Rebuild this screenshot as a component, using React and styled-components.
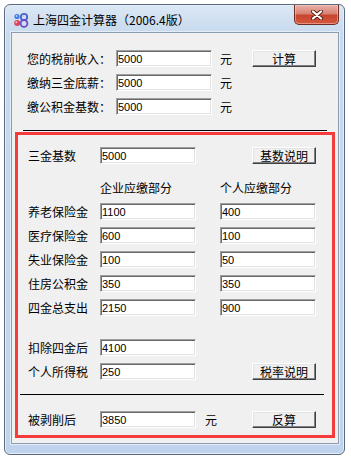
import React, { useState } from "react";
import styled, { createGlobalStyle } from "styled-components";

const GlobalStyle = createGlobalStyle`
  body {
    margin: 0;
    background: #ffffff;
    font-family: "Noto Sans CJK SC", "Noto Sans", sans-serif;
  }
`;

const Window = styled.div`
  box-sizing: border-box;
  width: 341px;
  height: 451px;
  margin: 4px 0 0 4px;
  border: 1px solid #5a6a7e;
  border-radius: 6px;
  background: linear-gradient(180deg, #dbe7f4 0px, #c8daee 28px, #bfd4ec 100%);
  box-shadow: inset 0 0 0 1px #e6eff9;
`;

const TitleBar = styled.div`
  display: flex;
  align-items: center;
  height: 27px;
  padding: 2px 5px 0 8px;
  box-sizing: border-box;
`;

const AppIcon = styled.svg`
  width: 16px;
  height: 16px;
  flex: none;
`;

const Title = styled.span`
  margin-left: 4px;
  font-size: 12px;
  line-height: 16px;
  color: #000;
`;

const CloseButton = styled.button`
  align-self: flex-start;
  margin: -2px 0 0 auto;
  width: 45px;
  height: 20px;
  padding: 0;
  display: flex;
  align-items: center;
  justify-content: center;
  border: 1px solid #6e2c24;
  border-top: none;
  border-radius: 0 0 5px 5px;
  background: linear-gradient(
    180deg,
    #e9b1a6 0%,
    #d98473 45%,
    #c8442f 55%,
    #d5583e 100%
  );
  box-shadow: inset 0 0 0 1px rgba(255, 220, 210, 0.45);
  cursor: pointer;
`;

const Client = styled.div`
  box-sizing: border-box;
  width: 328px;
  height: 412px;
  margin-left: 6px;
  padding: 0 3px;
  border: 1px solid #8c9db2;
  background: #f0f0f0;
  box-shadow: 0 0 0 1px #e4edf7;
`;

const TopForm = styled.div`
  display: grid;
  grid-template-columns: 89px 96px 40px 64px;
  grid-auto-rows: 24px;
  align-items: start;
  padding: 17px 0 0 12px;
`;

const Label = styled.span`
  font-size: 12px;
  line-height: 17px;
  color: #000;
  white-space: nowrap;
`;

const Unit = styled(Label)`
  padding-left: ${(p) => p.$indent || 8}px;
`;

const Field = styled.input`
  box-sizing: border-box;
  width: 96px;
  height: 17px;
  margin: 0;
  padding: 0 1px;
  border: 1px solid;
  border-color: #a0a0a0 #ffffff #ffffff #a0a0a0;
  box-shadow: inset 1px 1px 0 #696969, inset -1px -1px 0 #e3e3e3;
  background: #fff;
  font-family: "Liberation Sans", Arial, sans-serif;
  font-size: 11px;
  color: #000;
  outline: none;
`;

const PushButton = styled.button`
  box-sizing: border-box;
  grid-column: ${(p) => p.$col || "auto"};
  width: 64px;
  height: 17px;
  margin: 0;
  padding: 0;
  border: 1px solid;
  border-color: #ffffff #404040 #404040 #ffffff;
  box-shadow: inset -1px -1px 0 #808080, inset 1px 1px 0 #e3e3e3;
  background: #f0f0f0;
  font-family: "Noto Sans CJK SC", sans-serif;
  font-size: 12px;
  line-height: 14px;
  color: #000;
  cursor: pointer;
`;

const Rule = styled.div`
  width: 304px;
  height: 1px;
  background: #000;
  margin: ${(p) => p.$margin};
`;

const Highlight = styled.div`
  box-sizing: border-box;
  width: 320px;
  margin-top: 1px;
  padding: 12px 0 7px 0;
  border: 3px solid #f53b3b;
`;

const Row = styled.div`
  display: grid;
  grid-template-columns: 72px 96px 24px 96px;
  align-items: ${(p) => (p.$center ? "center" : "start")};
  height: ${(p) => p.$height || 24}px;
  padding-left: 10px;
`;

const Spacer = styled.div`
  height: ${(p) => p.$size}px;
`;

const RightButton = styled(PushButton)`
  grid-column: 4;
  justify-self: end;
`;

function CloseGlyph() {
  return (
    <svg width="12" height="10" viewBox="0 0 12 10">
      <path
        d="M2 1.5 L10 8.5 M10 1.5 L2 8.5"
        stroke="#5a1e16"
        strokeWidth="4"
        strokeLinecap="round"
      />
      <path
        d="M2 1.5 L10 8.5 M10 1.5 L2 8.5"
        stroke="#ffffff"
        strokeWidth="2.2"
        strokeLinecap="round"
      />
    </svg>
  );
}

function Logo() {
  return (
    <AppIcon viewBox="0 0 16 16">
      <circle cx="4" cy="4.5" r="2.6" fill="#3f7fe0" />
      <circle cx="3.6" cy="4" r="0.9" fill="#bcd8ff" />
      <circle cx="4.2" cy="11" r="3" fill="#e2415b" />
      <circle cx="3.4" cy="10.2" r="1" fill="#ffc0cc" />
      <circle cx="11" cy="5" r="3.2" fill="none" stroke="#4b63c8" strokeWidth="1.8" />
      <circle cx="11" cy="11.4" r="3.4" fill="none" stroke="#6a4fc4" strokeWidth="1.8" />
      <circle cx="10.2" cy="4.2" r="0.8" fill="#a9c4ff" />
    </AppIcon>
  );
}

const insurance = [
  { name: "养老保险金", company: "1100", person: "400" },
  { name: "医疗保险金", company: "600", person: "100" },
  { name: "失业保险金", company: "100", person: "50" },
  { name: "住房公积金", company: "350", person: "350" },
  { name: "四金总支出", company: "2150", person: "900" },
];

export default function App() {
  const [income, setIncome] = useState("5000");
  const [salaryBase, setSalaryBase] = useState("5000");
  const [fundBase, setFundBase] = useState("5000");

  return (
    <>
      <GlobalStyle />
      <Window>
        <TitleBar>
          <Logo />
          <Title>上海四金计算器（2006.4版）</Title>
          <CloseButton aria-label="关闭">
            <CloseGlyph />
          </CloseButton>
        </TitleBar>

        <Client>
          <TopForm>
            <Label>您的税前收入：</Label>
            <Field value={income} onChange={(e) => setIncome(e.target.value)} />
            <Unit>元</Unit>
            <PushButton>计算</PushButton>

            <Label>缴纳三金底薪：</Label>
            <Field
              value={salaryBase}
              onChange={(e) => setSalaryBase(e.target.value)}
            />
            <Unit>元</Unit>
            <span />

            <Label>缴公积金基数：</Label>
            <Field value={fundBase} onChange={(e) => setFundBase(e.target.value)} />
            <Unit>元</Unit>
          </TopForm>

          <Rule $margin="8px 0 0 8px" />

          <Highlight>
            <Row>
              <Label>三金基数</Label>
              <Field defaultValue="5000" />
              <RightButton>基数说明</RightButton>
            </Row>

            <Row $height={32} $center>
              <span />
              <Label>企业应缴部分</Label>
              <span />
              <Label>个人应缴部分</Label>
            </Row>

            {insurance.map((item) => (
              <Row key={item.name}>
                <Label>{item.name}</Label>
                <Field defaultValue={item.company} />
                <span />
                <Field defaultValue={item.person} />
              </Row>
            ))}

            <Spacer $size={16} />

            <Row>
              <Label>扣除四金后</Label>
              <Field defaultValue="4100" />
            </Row>
            <Row>
              <Label>个人所得税</Label>
              <Field defaultValue="250" />
              <RightButton>税率说明</RightButton>
            </Row>

            <Rule $margin="7px 0 16px 2px" />

            <Row $height={17}>
              <Label>被剥削后</Label>
              <Field defaultValue="3850" />
              <Unit $indent={9}>元</Unit>
              <RightButton>反算</RightButton>
            </Row>
          </Highlight>
        </Client>
      </Window>
    </>
  );
}
